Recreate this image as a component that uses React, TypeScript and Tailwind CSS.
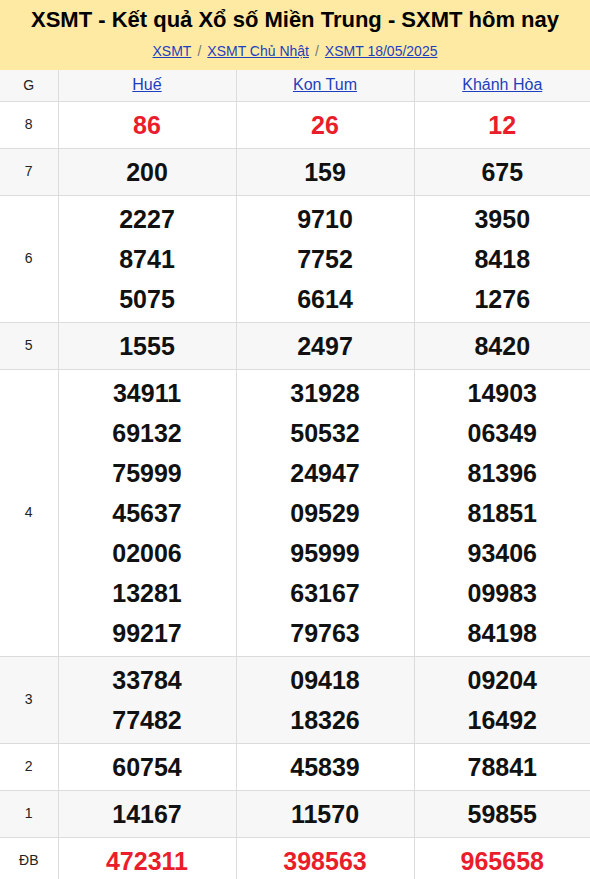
const rows: { label: string; alt: boolean; red?: boolean; cols: string[][] }[] = [
  { label: "8", alt: false, red: true, cols: [["86"], ["26"], ["12"]] },
  { label: "7", alt: true, cols: [["200"], ["159"], ["675"]] },
  {
    label: "6",
    alt: false,
    cols: [
      ["2227", "8741", "5075"],
      ["9710", "7752", "6614"],
      ["3950", "8418", "1276"],
    ],
  },
  { label: "5", alt: true, cols: [["1555"], ["2497"], ["8420"]] },
  {
    label: "4",
    alt: false,
    cols: [
      ["34911", "69132", "75999", "45637", "02006", "13281", "99217"],
      ["31928", "50532", "24947", "09529", "95999", "63167", "79763"],
      ["14903", "06349", "81396", "81851", "93406", "09983", "84198"],
    ],
  },
  {
    label: "3",
    alt: true,
    cols: [
      ["33784", "77482"],
      ["09418", "18326"],
      ["09204", "16492"],
    ],
  },
  { label: "2", alt: false, cols: [["60754"], ["45839"], ["78841"]] },
  { label: "1", alt: true, cols: [["14167"], ["11570"], ["59855"]] },
  { label: "ĐB", alt: false, red: true, cols: [["472311"], ["398563"], ["965658"]] },
];

const provinces = ["Huế", "Kon Tum", "Khánh Hòa"];

export default function App() {
  return (
    <div className="w-[590px] bg-white font-['Liberation_Sans',Arial,sans-serif] text-[#111]">
      <div className="h-[70px] bg-[#feeaa3] pt-[6px] text-center">
        <h1 className="text-[22px] font-bold leading-[28px] text-black">
          XSMT - Kết quả Xổ số Miền Trung - SXMT hôm nay
        </h1>
        <div className="mt-[9px] text-[14px] leading-[16px] text-[#777]">
          <a href="#" className="text-[#1d3fbd] underline">XSMT</a>
          <span className="mx-[6px]">/</span>
          <a href="#" className="text-[#1d3fbd] underline">XSMT Chủ Nhật</a>
          <span className="mx-[6px]">/</span>
          <a href="#" className="text-[#1d3fbd] underline">XSMT 18/05/2025</a>
        </div>
      </div>
      <table className="w-full table-fixed border-collapse">
        <colgroup>
          <col className="w-[58px]" />
          <col className="w-[178px]" />
          <col className="w-[178px]" />
          <col />
        </colgroup>
        <thead>
          <tr className="h-[31px] bg-[#f7f7f7]">
            <th className="border-r border-b border-[#dcdcdc] text-[14px] font-normal text-[#222]">G</th>
            {provinces.map((p, i) => (
              <th
                key={p}
                className={`border-b border-[#dcdcdc] text-[16px] font-normal ${i < 2 ? "border-r" : ""}`}
              >
                <a href="#" className="text-[#1d3fbd] underline">{p}</a>
              </th>
            ))}
          </tr>
        </thead>
        <tbody>
          {rows.map((r) => (
            <tr key={r.label} className={r.alt ? "bg-[#f7f7f7]" : "bg-white"}>
              <td className="border-r border-b border-[#dcdcdc] text-center text-[14px] text-[#222]">
                {r.label}
              </td>
              {r.cols.map((c, i) => (
                <td
                  key={i}
                  className={`border-b border-[#dcdcdc] py-[3px] text-center text-[25px] font-bold leading-[40px] ${
                    i < 2 ? "border-r" : ""
                  } ${r.red ? "text-[#ea1d2a]" : "text-[#111]"}`}
                >
                  {c.map((n) => (
                    <div key={n}>{n}</div>
                  ))}
                </td>
              ))}
            </tr>
          ))}
        </tbody>
      </table>
    </div>
  );
}
